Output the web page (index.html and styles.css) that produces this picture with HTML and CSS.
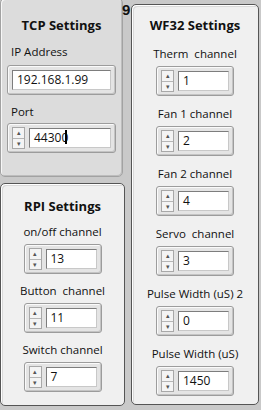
FILE: index.html
```html
<!DOCTYPE html>
<html lang="en">
<head>
    <meta charset="UTF-8">
    <title>Settings</title>
    <link rel="stylesheet" href="styles.css">
</head>
<body>
    <div class="left">
        <!-- TCP panel -->
        <div class="panel tcp">
            <h3>TCP Settings</h3>
            <div class="lbl left-lbl">IP Address</div>
            <div class="ctl wide">
                <div class="field">192.168.1.99</div>
            </div>
            <div class="lbl left-lbl port">Port</div>
            <div class="ctl wide">
                <div class="spin"><span>&#9652;</span><span>&#9662;</span></div>
                <div class="field">44300<i class="caret"></i></div>
            </div>
        </div>

        <!-- RPI panel -->
        <div class="panel rpi">
            <h3>RPI Settings</h3>
            <div class="item">
                <div class="lbl">on/off channel</div>
                <div class="ctl"><div class="spin"><span>&#9652;</span><span>&#9662;</span></div><div class="field">13</div></div>
            </div>
            <div class="item">
                <div class="lbl">Button&nbsp; channel</div>
                <div class="ctl"><div class="spin"><span>&#9652;</span><span>&#9662;</span></div><div class="field">11</div></div>
            </div>
            <div class="item">
                <div class="lbl">Switch channel</div>
                <div class="ctl"><div class="spin"><span>&#9652;</span><span>&#9662;</span></div><div class="field">7</div></div>
            </div>
        </div>
    </div>

    <div class="gap"><span class="nine">9</span></div>

    <!-- WF32 panel -->
    <div class="panel wf">
        <h3>WF32 Settings</h3>
        <div class="item">
            <div class="lbl">Therm&nbsp; channel</div>
            <div class="ctl"><div class="spin"><span>&#9652;</span><span>&#9662;</span></div><div class="field">1</div></div>
        </div>
        <div class="item">
            <div class="lbl">Fan 1 channel</div>
            <div class="ctl"><div class="spin"><span>&#9652;</span><span>&#9662;</span></div><div class="field">2</div></div>
        </div>
        <div class="item">
            <div class="lbl">Fan 2 channel</div>
            <div class="ctl"><div class="spin"><span>&#9652;</span><span>&#9662;</span></div><div class="field">4</div></div>
        </div>
        <div class="item">
            <div class="lbl">Servo&nbsp; channel</div>
            <div class="ctl"><div class="spin"><span>&#9652;</span><span>&#9662;</span></div><div class="field">3</div></div>
        </div>
        <div class="item">
            <div class="lbl">Pulse Width (uS) 2</div>
            <div class="ctl"><div class="spin"><span>&#9652;</span><span>&#9662;</span></div><div class="field">0</div></div>
        </div>
        <div class="item">
            <div class="lbl">Pulse Width (uS)</div>
            <div class="ctl"><div class="spin"><span>&#9652;</span><span>&#9662;</span></div><div class="field">1450</div></div>
        </div>
    </div>
</body>
</html>
```

FILE: styles.css
```css
body {
    margin: 0;
    width: 261px;
    height: 410px;
    overflow: hidden;
    display: flex;
    font-family: "Open Sans", "Noto Sans", sans-serif;
    font-size: 11.5px;
    color: #111;
    background-color: #c9c9c9;
}
.left {
    width: 125px;
    display: flex;
    flex-direction: column;
}
.gap {
    width: 6px;
    position: relative;
}
.nine {
    position: absolute;
    left: -3px;
    top: 1px;
    font-weight: bold;
    font-size: 15px;
    line-height: 18px;
    font-family: "Liberation Sans", Arial, sans-serif;
}
.panel {
    box-sizing: border-box;
    border-radius: 5px;
}
.panel h3 {
    margin: 0;
    font-size: 13px;
    font-weight: bold;
    text-align: center;
    line-height: 18px;
}
.tcp {
    width: 123px;
    height: 179px;
    margin-top: -2px;
    padding-top: 17px;
    background-color: #dcdcdc;
    border: 1px solid #a2a2a2;
    box-shadow: inset 1px 1px 0 #f7f7f7, inset -1px -1px 0 #bdbdbd;
}
.rpi {
    width: 125px;
    height: 223px;
    margin-top: 6px;
    padding-top: 13px;
    background-color: #f0f0f0;
    border: 1px solid #555;
    box-shadow: inset 1px 1px 0 #fff, inset 2px 2px 0 #d9d9d9;
}
.wf {
    width: 128px;
    height: 401px;
    margin-top: 4px;
    padding-top: 11px;
    background-color: #f0f0f0;
    border: 1px solid #555;
    box-shadow: inset 1px 1px 0 #fff, inset 2px 2px 0 #d9d9d9;
}
.lbl {
    text-align: center;
    line-height: 16px;
    white-space: nowrap;
}
.left-lbl {
    text-align: left;
    padding-left: 10px;
    margin-top: 10px;
    margin-bottom: 5px;
}
.port {
    margin-top: 9px;
    margin-bottom: 3px;
}
.item {
    display: flex;
    flex-direction: column;
    align-items: center;
    margin-top: 9px;
}
.wf .item {
    margin-top: 12px;
}
.item .lbl {
    margin-bottom: 4px;
}
.item + .item {
    margin-top: 9px;
}
.wf .item + .item {
    margin-top: 10px;
}
.ctl {
    box-sizing: border-box;
    width: 78px;
    height: 30px;
    display: flex;
    align-items: center;
    padding: 0 4px;
    border: 1px solid #9c9c9c;
    border-radius: 3px;
    background-color: #e4e4e4;
    box-shadow: inset 1px 1px 0 #fafafa, inset -1px -1px 0 #c4c4c4;
}
.ctl.wide {
    width: 109px;
    margin-left: 6px;
}
.spin {
    width: 13px;
    height: 22px;
    display: flex;
    flex-direction: column;
    border: 1px solid #a8a8a8;
    background-color: #f4f4f4;
    box-sizing: border-box;
}
.spin span {
    flex: 1;
    font-size: 7px;
    line-height: 10px;
    text-align: center;
    color: #555;
}
.spin span + span {
    border-top: 1px solid #b5b5b5;
}
.field {
    flex: 1;
    height: 20px;
    box-sizing: border-box;
    margin-left: 4px;
    padding-left: 4px;
    background-color: #fff;
    border: 1px solid #7d7d7d;
    border-right-color: #c8c8c8;
    border-bottom-color: #c8c8c8;
    font-size: 12px;
    line-height: 18px;
    color: #111;
    white-space: nowrap;
}
.ctl.wide .field:first-child {
    margin-left: 0;
}
.caret {
    display: inline-block;
    width: 2px;
    height: 14px;
    vertical-align: -2px;
    background-color: #000;
    margin-left: -3px;
}
```
